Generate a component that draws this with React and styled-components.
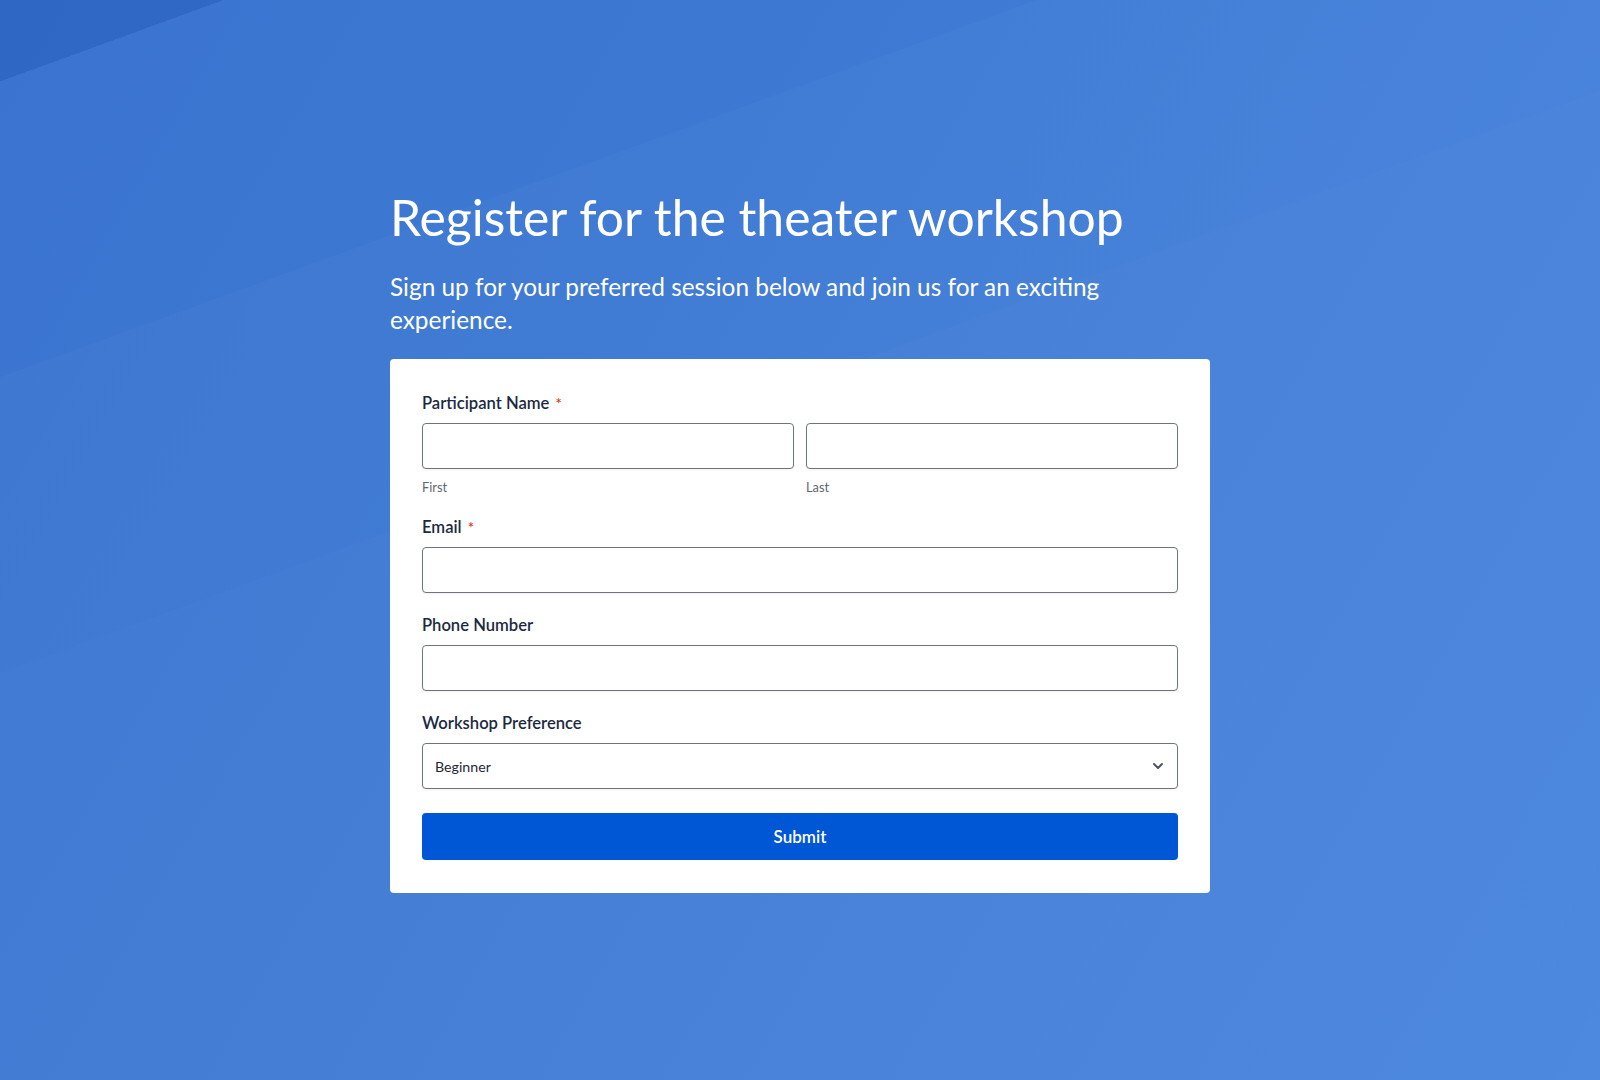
import React from "react";
import styled, { createGlobalStyle } from "styled-components";
import { FiChevronDown } from "react-icons/fi";

const GlobalStyle = createGlobalStyle`
  html, body {
    margin: 0;
    padding: 0;
    height: 100%;
  }
  body {
    font-family: Lato, "Open Sans", sans-serif;
  }
  * {
    box-sizing: border-box;
  }
`;

const App = () => {
  return (
    <Page>
      <GlobalStyle />
      <Content>
        <Title>Register for the theater workshop</Title>
        <Subtitle>
          Sign up for your preferred session below and join us for an exciting
          experience.
        </Subtitle>
        <Card>
          <Field>
            <Label>
              Participant Name <Required>*</Required>
            </Label>
            <NameRow>
              <NameCol>
                <Input type="text" />
                <SubLabel>First</SubLabel>
              </NameCol>
              <NameCol>
                <Input type="text" />
                <SubLabel>Last</SubLabel>
              </NameCol>
            </NameRow>
          </Field>
          <Field>
            <Label>
              Email <Required>*</Required>
            </Label>
            <Input type="email" />
          </Field>
          <Field>
            <Label>Phone Number</Label>
            <Input type="tel" />
          </Field>
          <Field>
            <Label>Workshop Preference</Label>
            <SelectWrap>
              <Select defaultValue="Beginner">
                <option>Beginner</option>
                <option>Intermediate</option>
                <option>Advanced</option>
              </Select>
              <Chevron>
                <FiChevronDown />
              </Chevron>
            </SelectWrap>
          </Field>
          <Submit type="button">Submit</Submit>
        </Card>
      </Content>
    </Page>
  );
};
export default App;

const Page = styled.div`
  width: 100%;
  min-height: 1080px;
  display: flex;
  justify-content: center;
  background:
    linear-gradient(
      160deg,
      rgba(20, 70, 170, 0.28) 0%,
      rgba(20, 70, 170, 0.28) 4.9%,
      rgba(255, 255, 255, 0) 4.9%,
      rgba(255, 255, 255, 0) 22.7%,
      rgba(255, 255, 255, 0.02) 22.7%,
      rgba(255, 255, 255, 0.02) 40.5%,
      rgba(255, 255, 255, 0.03) 40.5%,
      rgba(255, 255, 255, 0.03) 100%
    ),
    linear-gradient(120deg, #3a74d0 0%, #3d79d3 35%, #4480d9 65%, #4785dd 100%);
`;

const Content = styled.div`
  width: 820px;
  padding-top: 185px;
  display: flex;
  flex-direction: column;
`;

const Title = styled.h1`
  margin: 0;
  font-family: Lato, sans-serif;
  font-weight: 400;
  font-size: 49.8px;
  line-height: 64px;
  color: #ffffff;
  letter-spacing: 0;
`;

const Subtitle = styled.p`
  margin: 21px 0 0;
  max-width: 730px;
  font-family: Lato, sans-serif;
  font-size: 24.4px;
  line-height: 33px;
  color: #ffffff;
`;

const Card = styled.form`
  margin-top: 23px;
  background: #ffffff;
  border-radius: 4px;
  padding: 34px 32px 33px;
  display: flex;
  flex-direction: column;
  gap: 22px;
`;

const Field = styled.div`
  display: flex;
  flex-direction: column;
`;

const Label = styled.label`
  font-size: 16.6px;
  line-height: 20px;
  font-weight: 600;
  color: #1b2a3f;
  margin-bottom: 10px;
`;

const Required = styled.span`
  color: #d93a26;
  font-size: 15px;
  margin-left: 2px;
  vertical-align: 0;
`;

const NameRow = styled.div`
  display: grid;
  grid-template-columns: 1fr 1fr;
  gap: 12px;
`;

const NameCol = styled.div`
  display: flex;
  flex-direction: column;
`;

const SubLabel = styled.span`
  margin-top: 10px;
  font-size: 12.8px;
  line-height: 16px;
  color: #5f6670;
`;

const Input = styled.input`
  width: 100%;
  height: 46px;
  border: 1px solid #6d7380;
  border-radius: 4px;
  background: #ffffff;
  box-shadow: 0 1px 2px rgba(17, 24, 39, 0.06);
  font-family: Lato, sans-serif;
  font-size: 14px;
  padding: 0 12px;
  outline: none;
`;

const SelectWrap = styled.div`
  position: relative;
`;

const Select = styled.select`
  width: 100%;
  height: 46px;
  appearance: none;
  border: 1px solid #6d7380;
  border-radius: 4px;
  background: #ffffff;
  box-shadow: 0 1px 2px rgba(17, 24, 39, 0.06);
  font-family: Lato, sans-serif;
  font-size: 14.2px;
  color: #1f2733;
  padding: 0 40px 0 12px;
  outline: none;
`;

const Chevron = styled.span`
  position: absolute;
  right: 12px;
  top: 50%;
  transform: translateY(-50%);
  display: flex;
  color: #4b5563;
  font-size: 16px;
  pointer-events: none;

  svg {
    stroke-width: 3;
  }
`;

const Submit = styled.button`
  margin-top: 2px;
  height: 47px;
  border: none;
  border-radius: 4px;
  background: #0057d6;
  color: #ffffff;
  font-family: Lato, sans-serif;
  font-size: 17px;
  font-weight: 600;
  cursor: pointer;
`;
